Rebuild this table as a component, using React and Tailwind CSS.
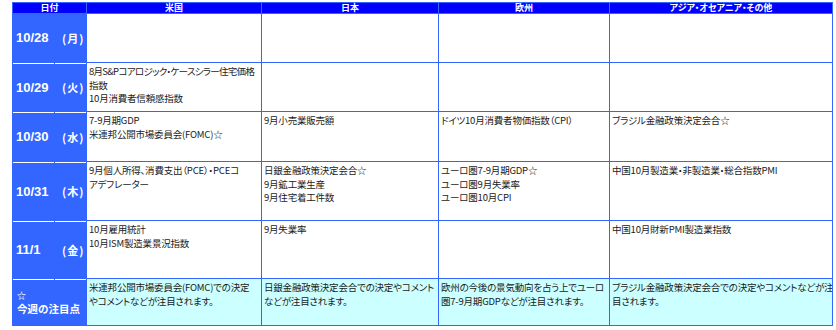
import React from "react";

const cjk = { fontFamily: '"Noto Sans CJK JP", "Noto Sans", sans-serif' };

const TIGHT = "8月S&Pコアロジック・ケースシラー住宅価格";

const rows = [
  { d: "10/28", w: "月", c: [[], [], [], []] },
  {
    d: "10/29",
    w: "火",
    c: [[TIGHT, "指数", "10月消費者信頼感指数"], [], [], []],
  },
  {
    d: "10/30",
    w: "水",
    c: [
      ["7-9月期GDP", "米連邦公開市場委員会(FOMC)☆"],
      ["9月小売業販売額"],
      ["ドイツ10月消費者物価指数（CPI）"],
      ["ブラジル金融政策決定会合☆"],
    ],
  },
  {
    d: "10/31",
    w: "木",
    c: [
      ["9月個人所得、消費支出（PCE）・PCEコ", "アデフレーター"],
      ["日銀金融政策決定会合☆", "9月鉱工業生産", "9月住宅着工件数"],
      ["ユーロ圏7-9月期GDP☆", "ユーロ圏9月失業率", "ユーロ圏10月CPI"],
      ["中国10月製造業・非製造業・総合指数PMI"],
    ],
  },
  {
    d: "11/1",
    w: "金",
    c: [["10月雇用統計", "10月ISM製造業景況指数"], ["9月失業率"], [], ["中国10月財新PMI製造業指数"]],
  },
];

const notes = [
  ["米連邦公開市場委員会(FOMC)での決定", "やコメントなどが注目されます。"],
  ["日銀金融政策決定会合での決定やコメント", "などが注目されます。"],
  ["欧州の今後の景気動向を占う上でユーロ", "圏7-9月期GDPなどが注目されます。"],
  ["ブラジル金融政策決定会合での決定やコメントなどが注", "目されます。"],
];

function Lines({ lines, bg }) {
  return (
    <div
      className={`${bg} pl-[2px] pt-[2px] text-[9.5px] leading-[13.5px] tracking-[-0.2px] text-[#1a1a1a] whitespace-nowrap overflow-hidden [font-feature-settings:'palt']`}
      style={cjk}
    >
      {lines.map((l, i) => (
        <div key={i} className={l === TIGHT ? "tracking-[-0.7px]" : ""}>
          {l}
        </div>
      ))}
    </div>
  );
}

function Head({ children, span }) {
  return (
    <div
      className={`${span ? "col-span-2" : ""} bg-[#0000ff] flex items-center justify-center text-white font-bold text-[9px] leading-[10px] [font-feature-settings:'palt']`}
      style={cjk}
    >
      {children}
    </div>
  );
}

export default function App() {
  return (
    <div className="w-[836px] h-[330px] bg-white">
      <div className="ml-[12px] pt-[2px]">
        <div className="w-[821px] grid grid-cols-[41px_31px_174px_176px_170px_222px] grid-rows-[10px_48px_48px_49px_58px_57px_46px] gap-px p-px bg-[#3366ff]">
          <Head span>日付</Head>
          <Head>米国</Head>
          <Head>日本</Head>
          <Head>欧州</Head>
          <Head>アジア・オセアニア・その他</Head>

          {rows.map((r, ri) => (
            <React.Fragment key={r.d}>
              <div
                className={`bg-[#3366ff] ${ri > 0 ? "border-t border-white" : ""} flex items-center pl-[3px] text-white font-bold text-[13px]`}
                style={{ fontFamily: '"Liberation Sans", Arial, sans-serif' }}
              >
                {r.d}
              </div>
              <div
                className={`bg-[#3366ff] ${ri > 0 ? "border-t border-white" : ""} flex items-center pl-[7px] text-white font-bold text-[11px] tracking-[1px]`}
                style={cjk}
              >
                ({r.w})
              </div>
              {r.c.map((lines, ci) => (
                <Lines key={ci} lines={lines} bg="bg-white" />
              ))}
            </React.Fragment>
          ))}

          <div className="col-span-2 bg-[#3366ff] flex flex-col">
            <div className="flex gap-px h-px">
              <div className="w-[41px] bg-white" />
              <div className="w-[31px] bg-white" />
            </div>
            <div
              className="flex-1 flex flex-col justify-center pl-[4px] pb-[1px] text-white font-bold"
              style={cjk}
            >
              <div className="text-[9px] leading-[12px]">☆</div>
              <div className="text-[10.5px] leading-[13px]">今週の注目点</div>
            </div>
          </div>
          {notes.map((lines, i) => (
            <Lines key={i} lines={lines} bg="bg-[#ccffff]" />
          ))}
        </div>
      </div>
    </div>
  );
}
